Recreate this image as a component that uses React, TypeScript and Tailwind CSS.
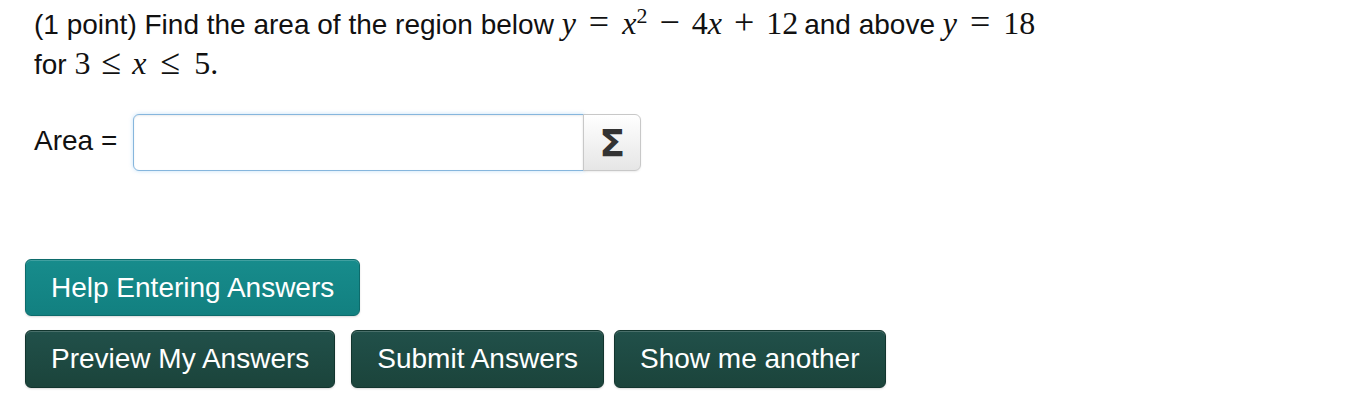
import React from 'react';

const sans = { fontFamily: '"Liberation Sans", Arial, Helvetica, sans-serif' };

function V({ children }: { children: React.ReactNode }) {
  // italic math variable
  return <span className="font-['Liberation_Serif'] italic text-[32px] leading-none">{children}</span>;
}

function N({ children }: { children: React.ReactNode }) {
  return <span className="font-['Liberation_Serif'] text-[32px] leading-none">{children}</span>;
}

function Op({ children, m }: { children: React.ReactNode; m: string }) {
  return <span className={`font-['Liberation_Serif'] text-[36px] leading-none ${m}`}>{children}</span>;
}

export default function App() {
  const btnDark =
    'h-[58px] px-[25px] rounded-[6px] border border-[#12352e] bg-gradient-to-b from-[#21504a] to-[#1b443b] text-white text-[28px] shadow-[inset_0_1px_0_rgba(255,255,255,0.18),0_1px_2px_rgba(0,0,0,0.15)]';

  return (
    <div className="min-h-screen bg-white text-[#111] px-[25px] pt-[4px]" style={sans}>
      {/* problem text */}
      <div className="pl-[9px] text-[28px] leading-[40px]">
        <div className="whitespace-nowrap h-[40px]">
          (1 point) Find the area of the region below <V>y</V>
          <Op m="mx-[13px]">=</Op>
          <V>x</V>
          <sup className="font-['Liberation_Serif'] text-[22px]">2</sup>
          <Op m="mx-[12px]">−</Op>
          <N>4</N>
          <V>x</V>
          <Op m="mx-[12px]">+</Op>
          <N>12</N>
          <span className="ml-[6px]">and above </span>
          <V>y</V>
          <Op m="mx-[13px]">=</Op>
          <N>18</N>
        </div>
        <div className="whitespace-nowrap h-[40px]">
          for <N>3</N>
          <Op m="mx-[11px]">≤</Op>
          <V>x</V>
          <Op m="mx-[14px]">≤</Op>
          <N>5.</N>
        </div>
      </div>

      {/* answer row */}
      <div className="mt-[30px] flex items-center pl-[9px]">
        <span className="text-[28px] leading-[40px] pb-[4px] mr-[16px]">Area =</span>
        <div className="flex h-[57px]">
          <input
            type="text"
            className="w-[451px] h-full rounded-l-[6px] border border-[#86b6dd] bg-white px-3 text-[24px] outline-none shadow-[inset_0_1px_2px_rgba(0,0,0,0.08),0_0_4px_rgba(82,168,236,0.35)]"
          />
          <button className="w-[58px] h-full -ml-px rounded-r-[6px] border border-[#c8c8c8] bg-gradient-to-b from-white to-[#e6e6e6] flex items-center justify-center shadow-[0_1px_2px_rgba(0,0,0,0.08)]">
            <span className="font-['DejaVu_Sans'] font-bold text-[38px] leading-none text-[#333]">Σ</span>
          </button>
        </div>
      </div>

      {/* buttons */}
      <div className="mt-[88px]">
        <button className="h-[57px] px-[25px] rounded-[6px] border border-[#0d6b6b] bg-gradient-to-b from-[#178c8c] to-[#128080] text-white text-[28px] shadow-[inset_0_1px_0_rgba(255,255,255,0.18),0_1px_2px_rgba(0,0,0,0.15)]">
          Help Entering Answers
        </button>
      </div>
      <div className="mt-[14px] flex">
        <button className={btnDark}>Preview My Answers</button>
        <button className={`${btnDark} ml-[16px]`}>Submit Answers</button>
        <button className={`${btnDark} ml-[10px]`}>Show me another</button>
      </div>
    </div>
  );
}
